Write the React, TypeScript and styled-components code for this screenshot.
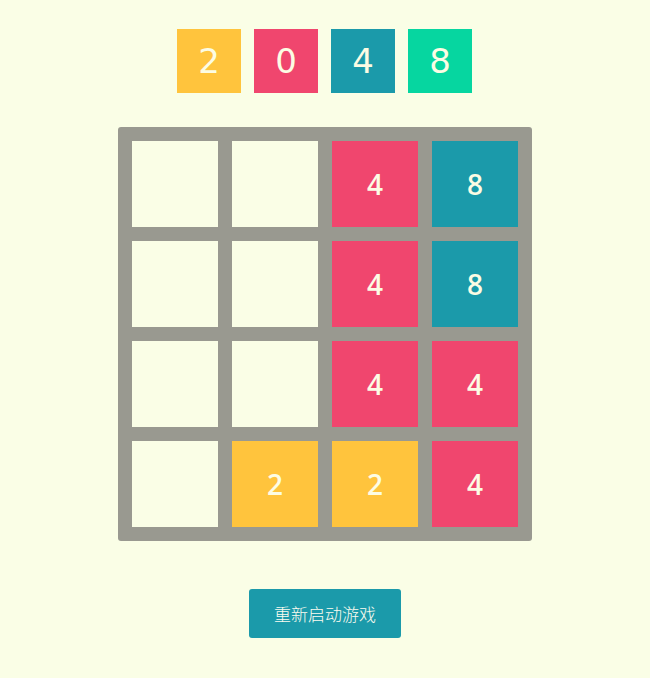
import React, { useState } from 'react';
import styled, { createGlobalStyle } from 'styled-components';

const GlobalStyle = createGlobalStyle`
    body {
        margin: 0;
        background: #fafee6;
        font-family: "DejaVu Sans", "Noto Sans CJK SC", sans-serif;
    }
`;

const colors: Record<number, string> = {
    2: '#ffc43d',
    4: '#f0466e',
    8: '#1b9aaa',
    16: '#06d6a0',
};

const StyledPage = styled.div`
    display: flex;
    flex-direction: column;
    align-items: center;
    padding-top: 29px;
`;

const StyledTitle = styled.div`
    display: flex;
    gap: 13px;
    padding-right: 1px;
`;

const StyledTitleTile = styled.div<{ $bg: string }>`
    width: 64px;
    height: 64px;
    display: flex;
    align-items: center;
    justify-content: center;
    background: ${(p) => p.$bg};
    color: #fcfce4;
    font-family: "DejaVu Sans", sans-serif;
    font-size: 34px;
    font-weight: normal;
`;

const StyledBoard = styled.div`
    margin-top: 34px;
    display: grid;
    grid-template-columns: repeat(4, 86px);
    grid-auto-rows: 86px;
    gap: 14px;
    padding: 14px;
    background: #999990;
    border-radius: 3px;
`;

const StyledCell = styled.div<{ $bg?: string }>`
    display: flex;
    align-items: center;
    justify-content: center;
    background: ${(p) => p.$bg || '#fafee6'};
    color: #fcfce4;
    font-family: "Open Sans", sans-serif;
    font-size: 28px;
    font-weight: 600;
`;

const StyledButton = styled.button`
    margin-top: 48px;
    width: 152px;
    height: 49px;
    border: none;
    border-radius: 3px;
    background: #1b9aaa;
    color: #fcfcf0;
    font-family: "Noto Sans CJK SC", sans-serif;
    font-size: 17px;
    font-weight: 300;
    cursor: pointer;
`;

const initialBoard = [
    [0, 0, 4, 8],
    [0, 0, 4, 8],
    [0, 0, 4, 4],
    [0, 2, 2, 4],
];

const App = (): JSX.Element => {
    const [board, setBoard] = useState<number[][]>(initialBoard);

    return (
        <StyledPage>
            <GlobalStyle />
            <StyledTitle>
                <StyledTitleTile $bg={colors[2]}>2</StyledTitleTile>
                <StyledTitleTile $bg={colors[4]}>0</StyledTitleTile>
                <StyledTitleTile $bg={colors[8]}>4</StyledTitleTile>
                <StyledTitleTile $bg={colors[16]}>8</StyledTitleTile>
            </StyledTitle>
            <StyledBoard>
                {board.flat().map((v, i) => (
                    <StyledCell key={i} $bg={v ? colors[v] : undefined}>{v || ''}</StyledCell>
                ))}
            </StyledBoard>
            <StyledButton onClick={() => setBoard(initialBoard)}>重新启动游戏</StyledButton>
        </StyledPage>
    );
};

export default App;
